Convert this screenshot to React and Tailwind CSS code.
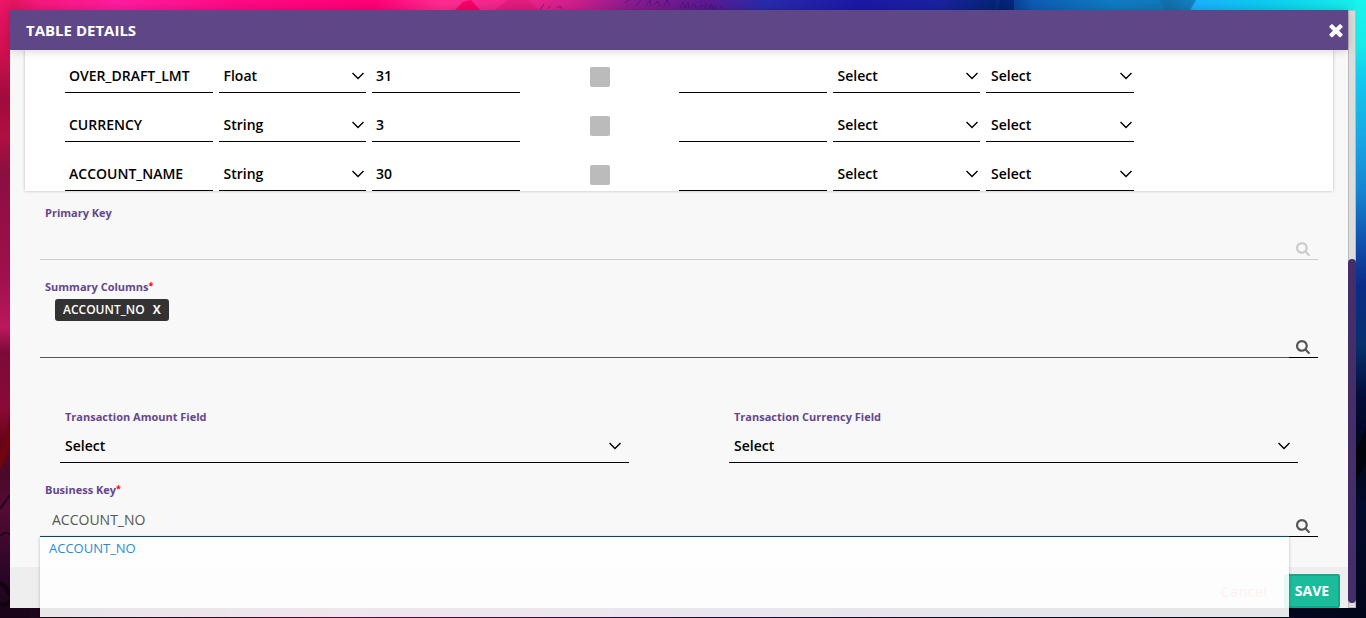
import React, { useState } from "react";

const ROWS = [
  { name: "OVER_DRAFT_LMT", type: "Float", length: "31" },
  { name: "CURRENCY", type: "String", length: "3" },
  { name: "ACCOUNT_NAME", type: "String", length: "30" },
];

const LABEL = "block pl-[5px] text-[11px] leading-4 font-bold text-[#65468c]";
const CELL_INPUT =
  "block h-[34px] w-full border-b border-black bg-transparent px-1 text-sm font-semibold text-black outline-none";

function Wallpaper() {
  return (
    <svg
      className="absolute inset-0 h-full w-full"
      viewBox="0 0 1366 618"
      preserveAspectRatio="none"
      aria-hidden="true"
    >
      <defs>
        <linearGradient id="top" x1="0" x2="1" y1="0" y2="0">
          <stop offset="0" stopColor="#e0155c" />
          <stop offset="0.02" stopColor="#f5187c" />
          <stop offset="0.08" stopColor="#ff1ca0" />
          <stop offset="0.17" stopColor="#ff0a86" />
          <stop offset="0.27" stopColor="#ff0078" />
          <stop offset="0.32" stopColor="#ff2c92" />
          <stop offset="0.38" stopColor="#f0238c" />
          <stop offset="0.42" stopColor="#cf1f8e" />
          <stop offset="0.46" stopColor="#8c1c90" />
          <stop offset="0.52" stopColor="#5a1a92" />
          <stop offset="0.56" stopColor="#2a2bac" />
          <stop offset="0.63" stopColor="#1c18a8" />
          <stop offset="0.69" stopColor="#1a22a0" />
          <stop offset="0.73" stopColor="#062478" />
          <stop offset="0.76" stopColor="#0f5cb4" />
          <stop offset="0.82" stopColor="#107cc4" />
          <stop offset="0.86" stopColor="#1278b8" />
          <stop offset="0.88" stopColor="#1cb0ff" />
          <stop offset="0.93" stopColor="#0ccbf0" />
          <stop offset="1" stopColor="#18f0ec" />
        </linearGradient>
        <linearGradient id="left" x1="0" x2="0" y1="0" y2="1">
          <stop offset="0" stopColor="#ec1468" />
          <stop offset="0.08" stopColor="#d31050" />
          <stop offset="0.16" stopColor="#a00b3c" />
          <stop offset="0.22" stopColor="#b00f42" />
          <stop offset="0.28" stopColor="#8c0e40" />
          <stop offset="0.45" stopColor="#a0104c" />
          <stop offset="0.53" stopColor="#bc185c" />
          <stop offset="0.57" stopColor="#7c0a38" />
          <stop offset="0.66" stopColor="#880a38" />
          <stop offset="0.71" stopColor="#6a0418" />
          <stop offset="0.76" stopColor="#4a0828" />
          <stop offset="0.82" stopColor="#560a34" />
          <stop offset="0.92" stopColor="#2c0628" />
          <stop offset="1" stopColor="#180418" />
        </linearGradient>
        <linearGradient id="right" x1="0" x2="0" y1="0" y2="1">
          <stop offset="0" stopColor="#18f4ee" />
          <stop offset="0.07" stopColor="#18eaea" />
          <stop offset="0.13" stopColor="#12c8ee" />
          <stop offset="0.23" stopColor="#18a4e4" />
          <stop offset="0.31" stopColor="#1684d0" />
          <stop offset="0.38" stopColor="#1058b4" />
          <stop offset="0.46" stopColor="#0a2c88" />
          <stop offset="0.56" stopColor="#06306c" />
          <stop offset="0.64" stopColor="#020c38" />
          <stop offset="0.74" stopColor="#010618" />
          <stop offset="0.82" stopColor="#030b2c" />
          <stop offset="1" stopColor="#02061a" />
        </linearGradient>
        <linearGradient id="bottom" x1="0" x2="1" y1="0" y2="0">
          <stop offset="0" stopColor="#180418" />
          <stop offset="0.1" stopColor="#2c0828" />
          <stop offset="0.25" stopColor="#680448" />
          <stop offset="0.5" stopColor="#300850" />
          <stop offset="0.75" stopColor="#080830" />
          <stop offset="1" stopColor="#02061a" />
        </linearGradient>
      </defs>
      <rect width="1366" height="618" fill="url(#bottom)" />
      <rect width="30" height="618" fill="url(#left)" />
      <rect x="1336" width="30" height="618" fill="url(#right)" />
      <rect x="10" width="1346" height="20" fill="url(#top)" />
      <path d="M455 10L463 2L471 0L480 10Z" fill="#f80068" />
      <path d="M495 10L508 0L528 0L538 10Z" fill="#d81878" opacity="0.6" />
      <path d="M1000 0h14v10h-16z" fill="#041c70" opacity="0.7" />
      <path d="M1160 0h36l-6 10h-24z" fill="#126ea8" opacity="0.7" />
      <g fill="none" stroke="#3a0a68" strokeWidth="1" opacity="0.5">
        <path d="M540 10l4-6M548 9l2-3M557 8l3-2 2 3M625 3l4-3M636 6l5-6M646 6l4-6 1 6M655 5l2-4 3 5M664 6l3-6 3 6" />
        <path d="M680 9l3-7 2 6 3-6 1 7M692 6l3-2 1 4M699 7l4-2M706 4l-1 5M709 9l2-5 2 5M716 5l-2 5M722 5l-2 4" />
      </g>
      <path d="M0 450Q7 438 10 412V444Q6 460 0 470Z" fill="#700410" />
      <path d="M0 509L10 495M0 536q7-6 10-1" fill="none" stroke="#20041c" strokeWidth="2" />
      <path d="M0 583q8 4 10 13M0 604q8 2 10-4" fill="none" stroke="#10020f" strokeWidth="4" />
      <path d="M1356 452L1366 428V462L1356 482Z" fill="#00030a" />
    </svg>
  );
}

function SearchIcon() {
  return (
    <svg className="h-[15px] w-[15px]" viewBox="0 0 1792 1792" fill="currentColor" aria-hidden="true">
      <path d="M1152 832q0-185-131.5-316.5t-316.5-131.5-316.5 131.5-131.5 316.5 131.5 316.5 316.5 131.5 316.5-131.5 131.5-316.5zm512 832q0 52-38 90t-90 38q-54 0-90-38l-343-342q-179 124-399 124-143 0-273.5-55.5t-225-150-150-225-55.5-273.5 55.5-273.5 150-225 225-150 273.5-55.5 273.5 55.5 225 150 150 225 55.5 273.5q0 220-124 399l343 343q37 37 37 90z" />
    </svg>
  );
}

function CloseIcon() {
  return (
    <svg className="h-5 w-5" viewBox="0 0 1792 1792" fill="currentColor" aria-hidden="true">
      <path d="M1490 1322q0 40-28 68l-136 136q-28 28-68 28t-68-28l-294-294-294 294q-28 28-68 28t-68-28l-136-136q-28-28-28-68t28-68l294-294-294-294q-28-28-28-68t28-68l136-136q28-28 68-28t68 28l294 294 294-294q28-28 68-28t68 28l136 136q28 28 28 68t-28 68l-294 294 294 294q28 28 28 68z" />
    </svg>
  );
}

function Dropdown({ id, label, options, wide }) {
  return (
    <div className="grid items-center border-b border-black">
      <select
        id={id}
        aria-label={label}
        className="col-start-1 row-start-1 h-[33px] w-full appearance-none bg-transparent pr-6 pl-[5px] text-sm font-semibold text-black outline-none"
      >
        {options.map((o) => (
          <option key={o}>{o}</option>
        ))}
      </select>
      <svg
        className={
          (wide ? "mr-2 " : "mr-0.5 ") +
          "pointer-events-none col-start-1 row-start-1 h-2 w-3 justify-self-end"
        }
        viewBox="0 0 12 8"
        fill="none"
        stroke="#000"
        strokeWidth="1.4"
        aria-hidden="true"
      >
        <path d="M0.5 1L6 6.5L11.5 1" />
      </svg>
    </div>
  );
}

function Lookup({ id, value, onChange, disabled, height, line, children }) {
  return (
    <div className="flex">
      <div className="relative min-w-0 flex-1">
        <input
          id={id}
          type="text"
          value={value}
          onChange={onChange}
          disabled={disabled}
          className={
            height + " " + line +
            " block w-full border-b bg-transparent px-3 text-sm text-[#555] outline-none"
          }
        />
        {children}
      </div>
      <button
        type="button"
        disabled={disabled}
        aria-label="Search"
        className={
          (disabled ? "border-[#ccc] text-[#ccc]" : "border-black text-[#555]") +
          " flex w-[29px] items-end justify-center border-b pb-[3px]"
        }
      >
        <SearchIcon />
      </button>
    </div>
  );
}

function Required() {
  return <span className="relative -top-0.5 text-[9px] leading-none text-[#ff0000]">*</span>;
}

export default function App() {
  const [businessKey, setBusinessKey] = useState("ACCOUNT_NO");
  const [summary, setSummary] = useState("");

  return (
    <div className="relative isolate flex min-h-screen flex-col bg-[#180418] p-2.5 font-['Open_Sans','Noto_Sans',sans-serif]">
      <Wallpaper />
      <div className="relative flex flex-1" role="dialog" aria-labelledby="title">
        <div className="flex min-w-0 flex-1 flex-col bg-[#f8f8f8]">
          <header className="relative z-10 flex h-10 items-center justify-between bg-[#5f4787] pr-0.5 pl-4 text-white shadow-[0_0_10px_rgba(0,0,0,0.2)]">
            <h1 id="title" className="text-[15px] font-bold">TABLE DETAILS</h1>
            <button type="button" aria-label="Close">
              <CloseIcon />
            </button>
          </header>

          <main className="flex-1 px-[15px] pb-[30px]">
            <div className="overflow-hidden bg-white px-10 shadow-[0_0_3px_rgba(0,0,0,0.25)]">
              <table className="-mt-1.5 w-full table-fixed">
                <tbody>
                  {ROWS.map((r) => (
                    <tr key={r.name}>
                      <td className="pt-[15px] pr-1.5">
                        <input className={CELL_INPUT} defaultValue={r.name} aria-label="Column name" />
                      </td>
                      <td className="pt-[15px] pr-1.5">
                        <Dropdown label="Data type" options={[r.type]} />
                      </td>
                      <td className="pt-[15px] pr-1.5">
                        <input className={CELL_INPUT} defaultValue={r.length} aria-label="Length" />
                      </td>
                      <td className="pr-1 pb-1.5 align-bottom">
                        <input
                          type="checkbox"
                          aria-label="Nullable"
                          className="mx-auto block h-5 w-5 appearance-none rounded-xs bg-[#bbb]"
                        />
                      </td>
                      <td className="pt-[15px] pr-1.5">
                        <input className={CELL_INPUT} aria-label="Default value" />
                      </td>
                      <td className="pt-[15px] pr-1.5">
                        <Dropdown label="Format" options={["Select"]} />
                      </td>
                      <td className="pt-[15px] pr-1.5">
                        <Dropdown label="Reference" options={["Select"]} />
                      </td>
                      <td />
                    </tr>
                  ))}
                </tbody>
              </table>
            </div>

            <div className="px-[15px] pt-3.5">
              <label htmlFor="primary" className={LABEL}>Primary Key</label>
              <Lookup id="primary" value="" disabled height="h-[39px]" line="border-[#ccc]" />

              <label htmlFor="summary" className={LABEL + " mt-[19px]"}>
                Summary Columns<Required />
              </label>
              <div className="mt-1 flex pl-[15px]">
                <span className="flex h-[22px] items-center gap-2 rounded-[3px] bg-[#333] px-2 text-xs font-semibold text-white">
                  ACCOUNT_NO
                  <button type="button" aria-label="Remove ACCOUNT_NO" className="font-bold">X</button>
                </span>
              </div>
              <Lookup
                id="summary"
                value={summary}
                onChange={(e) => setSummary(e.target.value)}
                height="h-[37px]"
                line="border-[#555]"
              />

              <div className="mt-[51px] grid grid-cols-2 gap-x-[60px]">
                <div className="px-5">
                  <label htmlFor="amount" className={LABEL + " mb-1"}>Transaction Amount Field</label>
                  <Dropdown id="amount" options={["Select"]} wide />
                </div>
                <div className="px-5">
                  <label htmlFor="currency" className={LABEL + " mb-1"}>Transaction Currency Field</label>
                  <Dropdown id="currency" options={["Select"]} wide />
                </div>
              </div>

              <label htmlFor="business" className={LABEL + " mt-[19px] mb-1"}>
                Business Key<Required />
              </label>
              <Lookup
                id="business"
                value={businessKey}
                onChange={(e) => setBusinessKey(e.target.value)}
                height="h-[35px]"
                line="border-[#005770]"
              >
                <ul className="absolute inset-x-0 top-full z-20 h-20 bg-white/90 px-[9px] pt-px shadow-[0_0_3px_rgba(0,0,0,0.25)]">
                  <li>
                    <button type="button" className="block text-[13px] leading-5 text-[#1e8fd5]">
                      ACCOUNT_NO
                    </button>
                  </li>
                </ul>
              </Lookup>
            </div>
          </main>

          <footer className="flex items-center justify-end gap-[17px] bg-[#eee] pt-[7px] pr-2">
            <button type="button" className="text-[15px] text-[#ff4b4b]">Cancel</button>
            <button
              type="button"
              className="h-[34px] w-14 rounded-xs border-2 border-[#17a689] bg-[#1abc9c] text-sm font-bold text-white"
            >
              SAVE
            </button>
          </footer>
        </div>

        <div className="flex w-2 flex-col border border-[#bbb] bg-[#ddd]" aria-hidden="true">
          <div className="grow-[248]" />
          <div className="-mx-px grow-[344] rounded-full bg-[#452d69]" />
          <div className="h-1" />
        </div>
      </div>
    </div>
  );
}
